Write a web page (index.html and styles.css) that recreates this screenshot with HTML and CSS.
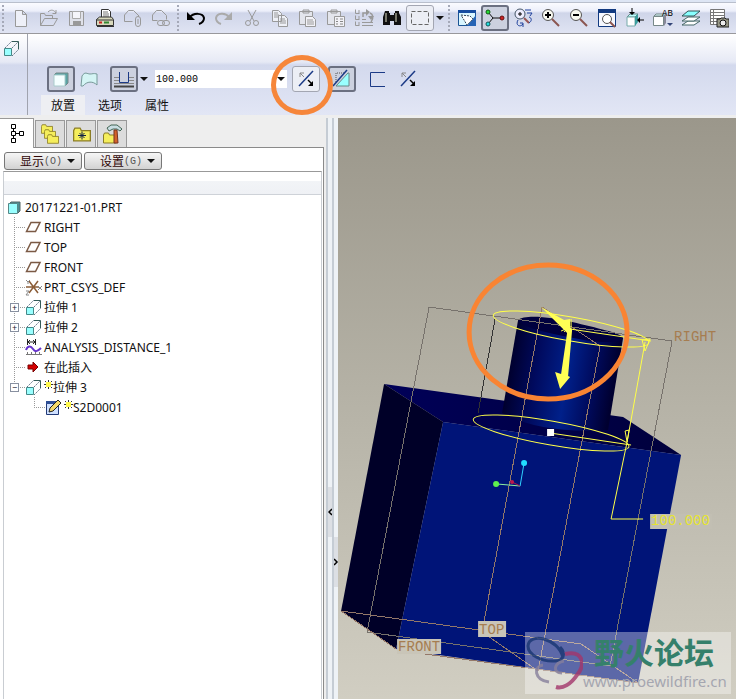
FILE: index.html
```html
<!DOCTYPE html>
<html lang="zh-CN">

<head>
    <meta charset="UTF-8">
    <meta name="viewport" content="width=device-width, initial-scale=1.0">
    <title>20171221-01.PRT</title>
    <link rel="stylesheet" href="styles.css">
</head>

<body>
    <!-- shared icons -->
    <svg class="defs" aria-hidden="true">
        <symbol id="extrude" viewBox="0 0 18 18">
            <path d="M2 9L9 2M9 9l6-6M9 17l7-7" fill="none" stroke="#678" stroke-dasharray="2 1" />
            <path d="M9 2.500h6.500V10" fill="none" stroke="#345b58" />
            <path d="M1.500 9.500h7v7h-7z" fill="#9ff" stroke="#488" />
        </symbol>
        <symbol id="plane" viewBox="0 0 18 18">
            <path d="M1.500 13.500L6 4.500h9L10.500 13.500z" fill="none" stroke="#7b5a45" stroke-width="1.500" />
        </symbol>
        <symbol id="flip" viewBox="0 0 20 20">
            <path d="M3 17L17 2" stroke="#1b3a86" stroke-width="1.500" />
            <path d="M4 8V4h4M4 4l4 4" fill="none" stroke="#888" />
            <path d="M12 11l4 4" stroke="#000" stroke-width="1.500" />
            <path d="M17 12v5h-5z" fill="#000" />
        </symbol>
        <symbol id="spark" viewBox="0 0 9 9">
            <path d="M0 4.500h9M4.500 0v9M1 1l7 7M8 1L1 8" stroke="#333" />
            <path d="M2 2h5v5H2z" fill="#fff94a" />
        </symbol>
        <symbol id="folder" viewBox="0 0 14 11">
            <path d="M.5 2.500l1-2h4l1 2h7v8H.5z" fill="#f5ee5c" stroke="#8b7d26" />
        </symbol>
    </svg>

    <div class="toolbar">
        <span class="grip"></span>
        <button class="tool" aria-label="新建"><svg viewBox="0 0 20 20"><path d="M4.500 2.500h7l4 4v12h-11zM11.500 2.500v4h4" fill="#eef0f8" stroke="#999" /></svg></button>
        <button class="tool" aria-label="打开"><svg viewBox="0 0 20 20"><path d="M1.500 17.500v-12h4l1 2h7v3M1.500 17.500l4-7h13l-4 7zM9 4c3-3 6-2 8 1M17 2v3.500h-3.500" fill="none" stroke="#999" /></svg></button>
        <button class="tool" aria-label="保存"><svg viewBox="0 0 20 20"><path d="M2.500 3.500h14v14h-14z" fill="#dfe1e9" stroke="#999" /><path d="M5.500 3.500h8v7h-8z" fill="#f5f5fa" stroke="#aaa" /><path d="M6 13h8v4H6z" fill="#999" /></svg></button>
        <button class="tool" aria-label="打印"><svg viewBox="0 0 20 20"><path d="M6.500 10V1.500h7l2 2V10" fill="#fff" stroke="#333" /><path d="M8 4h5M8 6h6M8 8h6" stroke="#777" /><path d="M1.500 11.500l3-2.500h12l2 2.500v6h-17z" fill="#d8d8bc" stroke="#333" /><path d="M1 12h17M2 18.500h17" stroke="#333" /><path d="M4 14.500h3" stroke="#c22" stroke-width="2" /><path d="M9 14.500h5" stroke="#383" stroke-width="2" /></svg></button>
        <button class="tool" aria-label="附件"><svg viewBox="0 0 20 20"><path d="M1.500 13.500V7l4-4.500h5l5 5M1.500 13.500h8M15.500 7v2" fill="none" stroke="#999" /><rect x="12.500" y="8.500" width="5" height="10" rx="2.500" fill="none" stroke="#999" /><path d="M15 11v5" stroke="#999" /></svg></button>
        <button class="tool" aria-label="链接"><svg viewBox="0 0 20 20"><path d="M1.500 12.500V7l4-4.500h5l5 5v4M1.500 12.500h5" fill="none" stroke="#999" /><rect x="6.500" y="12.500" width="7" height="5" rx="2.500" fill="none" stroke="#999" /><rect x="11.500" y="12.500" width="7" height="5" rx="2.500" fill="none" stroke="#999" /></svg></button>
        <span class="grip"></span>
        <button class="tool" aria-label="撤消"><svg viewBox="0 0 20 20"><path d="M3 10c5-6 14-5 15 0 0 3-2 5-5 6" fill="none" stroke="#000" stroke-width="2" /><path d="M1 4v8h8z" /></svg></button>
        <button class="tool" aria-label="重做"><svg viewBox="0 0 20 20"><path d="M15 9c-4-5-12-4-13 1 0 3 2 5 5 6" fill="none" stroke="#aaa" stroke-width="2" /><path d="M18 4v8h-8z" fill="#aaa" /></svg></button>
        <button class="tool" aria-label="剪切"><svg viewBox="0 0 20 20"><path d="M6 2l6 11M14 2L8 13" stroke="#999" /><circle cx="6" cy="15" r="2.500" fill="none" stroke="#999" /><circle cx="14" cy="15" r="2.500" fill="none" stroke="#999" /></svg></button>
        <button class="tool" aria-label="复制"><svg viewBox="0 0 20 20"><path d="M2.500 2.500h6l3 3v8h-9zM8.500 7.500h6l3 3v8h-9z" fill="#eef0f6" stroke="#999" /><path d="M4 5h4M4 7h5M4 9h4M10 11h5M10 13h6M10 15h6" stroke="#999" /></svg></button>
        <button class="tool" aria-label="粘贴"><svg viewBox="0 0 20 20"><path d="M1.500 3.500h13v13h-13zM5 5V2h6v3z" fill="#e3e5ec" stroke="#999" /><path d="M7.500 8.500h7l3 3v7h-10z" fill="#f2f2f7" stroke="#999" /><path d="M9 12h6M9 14h7M9 16h7" stroke="#999" /></svg></button>
        <button class="tool" aria-label="选择性粘贴"><svg viewBox="0 0 20 20"><path d="M1.500 3.500h13v13h-13zM5 5V2h6v3z" fill="#e3e5ec" stroke="#999" /><path d="M8.500 8.500h10v10h-10z" fill="#f2f2f7" stroke="#999" /><path d="M10 11h2M14 11h3M10 13.500h2M14 13.500h3M10 16h2M14 16h3" stroke="#888" /></svg></button>
        <button class="tool" aria-label="再生"><svg viewBox="0 0 20 20"><path d="M1.500 1.500v4h4M1.500 7.500v4h4M1.500 13.500v4h4M5 2v3M5 8v3M5 14v3M8 17.500h11M8 14.500h11M8 11.500h4" fill="none" stroke="#999" /><path d="M9 9V5h3M17 14c3-4 2-8-1-9" fill="none" stroke="#999" stroke-width="1.500" /><path d="M12 1v7l4-4zM14 8h6l-3 4z" fill="#999" /></svg></button>
        <button class="tool" aria-label="查找"><svg viewBox="0 0 20 20"><path d="M3 3h4v2h1v12H1V9zM13 3h4v2l2 4v8h-7V5h1zM8 7h4v6H8z" fill="#111" /><path d="M4 5v9M14 5v9" stroke="#998" stroke-width="1.500" /></svg></button>
        <button class="tool boxed" aria-label="选取"><svg viewBox="0 0 20 20"><path d="M1.500 3.500h17v13h-17z" fill="none" stroke="#666" stroke-dasharray="4 2" /></svg></button>
        <button class="drop" aria-label="更多"><i class="caret"></i></button>
        <span class="grip"></span>
        <button class="tool" aria-label="重画"><svg viewBox="0 0 20 20"><path d="M1.500 2.500h17v15h-17z" fill="#d9f6ff" stroke="#1a5494" /><path d="M1 2h18v3H1z" fill="#174da0" /><path d="M19 7v11h-9z" fill="#2563b5" /><path d="M4 7l9 1 3 3-6 6z" fill="#fff" stroke="#345" stroke-dasharray="2 1" /></svg></button>
        <button class="tool pressed" aria-label="旋转中心"><svg viewBox="0 0 20 20"><path d="M3 4l5 6-5 6M8 10h9" fill="none" stroke="#111" /><circle cx="3" cy="4" r="2" fill="#2d3" stroke="#151" /><circle cx="3" cy="16" r="2" fill="#2dd" stroke="#155" /><circle cx="17" cy="10" r="2" fill="#c22" stroke="#611" /></svg></button>
        <button class="tool" aria-label="定向模式"><svg viewBox="0 0 20 20"><circle cx="7" cy="6" r="5" fill="#eef" stroke="#456" /><path d="M5 6h4M7 4v4" stroke="#000" /><path d="M11 10l5 5" stroke="#955" stroke-width="2" /><path d="M12 2h6M14 5h5M17 8l2-3M5 12c-3 5 2 8 5 4M10 19v-4H7M16 9c3 1 3 4 0 6" fill="none" stroke="#1d3f9c" /></svg></button>
        <button class="tool" aria-label="放大"><svg viewBox="0 0 20 20"><circle cx="7" cy="7" r="5.500" fill="#f9f9ef" stroke="#555" /><path d="M4 7h6M7 4v6" stroke="#000" stroke-width="2" /><path d="M11 11l7 7" stroke="#8b5550" stroke-width="2" /></svg></button>
        <button class="tool" aria-label="缩小"><svg viewBox="0 0 20 20"><circle cx="7" cy="7" r="5.500" fill="#f9f9ef" stroke="#555" /><path d="M4 7h6" stroke="#000" stroke-width="2" /><path d="M11 11l7 7" stroke="#8b5550" stroke-width="2" /></svg></button>
        <button class="tool" aria-label="重新调整"><svg viewBox="0 0 20 20"><path d="M1.500 2.500h17v16h-17z" fill="#f6f8ff" stroke="#123a80" /><path d="M1 1h18v4H1z" fill="#123a80" /><circle cx="10" cy="11" r="4.500" fill="#fff" stroke="#555" /><path d="M13 14l5 5" stroke="#8b5550" stroke-width="2" /></svg></button>
        <button class="tool" aria-label="重定向"><svg viewBox="0 0 20 20"><path d="M2 9l3-3h8l-3 3z" fill="#bff" stroke="#688" /><path d="M2 9h8v9H2z" fill="#fff" stroke="#7aa" /><path d="M10 9l3-3v8l-3 4z" fill="#3a9d9d" /><path d="M7 0v6M19 12h-6" stroke="#000" /><path d="M4 4h6L7 7zM15 9v6l-3-3z" /></svg></button>
        <button class="tool" aria-label="视图列表"><svg viewBox="0 0 20 20"><path d="M1 8l2-2h10l-2 2z" fill="#dff" stroke="#788" /><path d="M.5 8.500h10v9H.5z" fill="#fff" stroke="#788" /><path d="M11 8l2-2v9l-2 3z" fill="#889" /><path d="M14 15h6l-3 3z" fill="#347" /><text x="9" y="8" class="tiny">AB</text></svg></button>
        <button class="tool" aria-label="层"><svg viewBox="0 0 20 20"><path d="M1 17l6-4h12l-6 4z" fill="#fff" stroke="#466" /><path d="M1 13l6-4h12l-6 4z" fill="#fff" stroke="#466" /><path d="M1 8l6-5h12l-6 5z" fill="#8ff" stroke="#355" /></svg></button>
        <button class="tool" aria-label="视图管理器"><svg viewBox="0 0 20 20"><path d="M1.500 1.500h14v15h-14zM1 4.500h15M1 7.500h15M1 10.500h15M1 13.500h15M4.500 1v16" fill="#fff" stroke="#777" /><path d="M8 11h3l1-1h4l1 1h3v8H8z" fill="#998" stroke="#222" /><circle cx="14" cy="15" r="3" fill="#eee" stroke="#111" /></svg></button>
    </div>

    <div class="dashboard">
        <div class="feature-type"><svg class="icon"><use href="#extrude" /></svg></div>
        <div class="feature-options">
            <div class="option-row">
                <button class="tool pressed" aria-label="实体"><svg viewBox="0 0 20 20"><path d="M3 6l2-2h12v10l-3 3z" fill="#5aa5a5" stroke="#788" /><path d="M3 6h11v11H3z" fill="#f4ffff" stroke="#acc" /></svg></button>
                <button class="tool" aria-label="曲面"><svg viewBox="0 0 20 20"><path d="M3 7c3-5 5-2 8-2s3-1 7 0v11c-4-4-10-4-14 1L2 17z" fill="#d4f4f4" stroke="#799" /></svg></button>
                <button class="tool pressed depth" aria-label="深度"><svg viewBox="0 0 20 20"><path d="M0 8.500h6M14 8.500h6M0 11.500h6M14 11.500h6M0 14.500h20" stroke="#888" /><path d="M5.500 3v10.500h9V3" fill="none" stroke="#1b3a86" /><path d="M0 17.500h20" stroke="#444" stroke-width="2" /></svg></button>
                <button class="drop" aria-label="深度选项"><i class="caret"></i></button>
                <div class="combo">
                    <input type="text" value="100.000" aria-label="深度值">
                    <button class="drop" aria-label="最近值"><i class="caret"></i></button>
                </div>
                <div class="marked">
                    <button class="tool boxed" aria-label="反向"><svg><use href="#flip" /></svg></button>
                    <span class="mark"></span>
                </div>
                <button class="tool pressed" aria-label="移除材料"><svg viewBox="0 0 20 20"><path d="M4 17L16 4h1v13z" fill="#9ff" stroke="#688" /><path d="M4 13V4h8" fill="none" stroke="#555" stroke-dasharray="1 1" /><path d="M1 17L15 1" stroke="#1b3a86" stroke-width="1.500" /></svg></button>
                <button class="tool thicken" aria-label="加厚"><svg viewBox="0 0 20 20"><path d="M17 3.500H2.500v14H17" fill="none" stroke="#1b3a86" /></svg></button>
                <button class="tool" aria-label="更改侧"><svg><use href="#flip" /></svg></button>
            </div>
            <div class="option-tabs">
                <button class="active">放置</button>
                <button>选项</button>
                <button>属性</button>
            </div>
        </div>
    </div>

    <main class="workspace">
        <section class="navigator">
            <div class="nav-tabs">
                <button class="active" aria-label="模型树"><svg viewBox="0 0 22 22"><path d="M7.500 5v11M7.500 10.500h7" stroke="#000" /><path d="M5.500 1.500h4v4h-4zM5.500 8.500h4v4h-4zM5.500 15.500h4v4h-4zM13.500 8.500h4v4h-4z" fill="#fff" stroke="#000" /></svg></button>
                <button aria-label="文件夹"><svg viewBox="0 0 22 22"><use href="#folder" x="2" y="1" width="12" height="10" /><use href="#folder" x="5" y="6" width="12" height="10" /><use href="#folder" x="8" y="11" width="12" height="10" /></svg></button>
                <button aria-label="收藏夹"><svg viewBox="0 0 22 22"><use href="#folder" x="3" y="4" width="18" height="15" /><path d="M8 12.500h8M12 8.500v8M9.500 10l5 5M14.500 10l-5 5" stroke="#124" /></svg></button>
                <button aria-label="连接"><svg viewBox="0 0 22 22"><use href="#folder" x="2" y="9" width="14" height="12" /><path d="M6 5l4-3h6l5 4-2 2-3-2h-4L8 8z" fill="#c9dde2" stroke="#465" /><path d="M13 7h3l1 13h-4z" fill="#d4622a" stroke="#732" /></svg></button>
            </div>
            <div class="nav-panel">
                <div class="nav-menus">
                    <button>显示<span>(O)</span><i class="caret"></i></button>
                    <button>设置<span>(G)</span><i class="caret"></i></button>
                </div>
                <div class="tree-box">
                    <div class="tree-head"></div>
                    <ul class="tree">
                        <li class="root"><svg class="icon" viewBox="0 0 18 18"><path d="M3 6l2-2h9v9l-2 2z" fill="#4c8f94" stroke="#566" /><path d="M2.500 5.500h9v10h-9z" fill="#9ff" stroke="#588" /></svg>20171221-01.PRT</li>
                        <li><span class="branch"></span><svg class="icon"><use href="#plane" /></svg>RIGHT</li>
                        <li><span class="branch"></span><svg class="icon"><use href="#plane" /></svg>TOP</li>
                        <li><span class="branch"></span><svg class="icon"><use href="#plane" /></svg>FRONT</li>
                        <li><span class="branch"></span><svg class="icon" viewBox="0 0 18 18"><path d="M1 9h13M4 3l9 12M13 3L4 15" stroke="#8b5d38" stroke-width="1.500" /><path d="M1 2l2 2 2-2M3 4v2M13 8l4 4M17 8l-4 4M1 13h3l-3 4h3" fill="none" stroke="#888" /></svg>PRT_CSYS_DEF</li>
                        <li><span class="branch"><button class="toggle" aria-label="展开">+</button></span><svg class="icon"><use href="#extrude" /></svg>拉伸 1</li>
                        <li><span class="branch"><button class="toggle" aria-label="展开">+</button></span><svg class="icon"><use href="#extrude" /></svg>拉伸 2</li>
                        <li><span class="branch"></span><svg class="icon" viewBox="0 0 18 18"><path d="M2.500 1v6M10.500 1v6M3 4h7M5 2L3 4l2 2M8 2l2 2-2 2" fill="none" stroke="#222" /><path d="M1 12c2-5 5-4 7-1s4 3 8-1" fill="none" stroke="#63c" stroke-width="2" /><path d="M1 16.500h16M2.500 14v2M6.500 14v2M10.500 14v2M14.500 14v2" stroke="#777" /></svg>ANALYSIS_DISTANCE_1</li>
                        <li><span class="branch"></span><svg class="icon" viewBox="0 0 18 18"><path d="M3 7h5V4l5 5-5 5v-3H3z" fill="#d40000" stroke="#700" /></svg>在此插入</li>
                        <li><span class="branch last"><button class="toggle" aria-label="折叠">−</button></span><svg class="icon"><use href="#extrude" /></svg><svg class="new"><use href="#spark" /></svg>拉伸 3</li>
                        <li class="child"><span class="branch last"></span><svg class="icon" viewBox="0 0 18 18"><path d="M1.500 4.500h12v12h-12z" fill="#cfe0ff" stroke="#223a78" /><path d="M1 3h13v3H1z" fill="#2e4f96" /><path d="M4 14l1-4 8-8 3 3-8 8z" fill="#f5da6a" stroke="#222" /></svg><svg class="new"><use href="#spark" /></svg>S2D0001</li>
                    </ul>
                </div>
            </div>
        </section>

        <div class="splitter">
            <div class="rail"><button aria-label="隐藏导航器"><svg viewBox="0 0 6 8"><path d="M4 1L1 4l3 3" fill="none" stroke="#000" stroke-width="1.500" /></svg></button></div>
            <div class="rail low"><button aria-label="显示浏览器"><svg viewBox="0 0 6 8"><path d="M0 1l3 3-3 3" fill="none" stroke="#000" stroke-width="1.500" /></svg></button></div>
        </div>

        <section class="viewer">
            <svg class="model" viewBox="338 118 398 581">
                <defs>
                    <linearGradient id="barrel" gradientUnits="userSpaceOnUse" x1="510" y1="365" x2="614" y2="382">
                        <stop offset="0" stop-color="#00002e" />
                        <stop offset=".25" stop-color="#000a5e" />
                        <stop offset=".55" stop-color="#00208a" />
                        <stop offset=".8" stop-color="#000a5c" />
                        <stop offset="1" stop-color="#000030" />
                    </linearGradient>
                    <linearGradient id="lid" x1="0" x2="1">
                        <stop offset="0" stop-color="#000058" />
                        <stop offset="1" stop-color="#00003c" />
                    </linearGradient>
                </defs>
                <!-- box -->
                <path d="M384 384L623 417L681 455L443 422z" fill="url(#lid)" />
                <path d="M384 384L443 422L396 649L341 611z" fill="#000028" />
                <path d="M443 422L681 455L638 683L396 649z" fill="#001478" />
                <!-- cylinder -->
                <path d="M518 320L502 413Q540 434 608 430L623 338z" fill="url(#barrel)" />
                <path d="M518 320C524 314 552 317 572 322C596 328 622 333 623 338C618 345 593 342 568 337C542 332 520 326 518 320z" fill="#00003e" />
                <!-- datum planes -->
                <g class="datum">
                    <path d="M429 307L672 341L610 666L367 632z" />
                    <path class="dark" d="M495 319L478 413" />
                    <path class="brown" d="M396 649L341 611L581 644L638 683L425 654" />
                    <path class="brown" d="M542 307L600 346L538 671L482 632z" />
                </g>
                <!-- sketch and depth dimension -->
                <g class="sketch">
                    <ellipse cx="571" cy="329" rx="79" ry="12" transform="rotate(10 571 329)" />
                    <ellipse cx="551" cy="433" rx="79" ry="12" transform="rotate(10 551 433)" />
                    <path d="M570 329L651 341M550 433L631 445M645 342L627 442L611 519H643" />
                    <path d="M642 340l8-1-5 12zM625 431l4-1-2 12z" />
                    <path d="M561 331l7-3M564 332l4-4M571 319v12" />
                </g>
                <path d="M541 307L564 320L570 319V327L572 330L568 376L570 377L560 389L555 372L561 374L567 333z" fill="#ffff55" />
                <path d="M547 429h7v7h-7z" fill="#fff" />
                <!-- spin center -->
                <g fill="none">
                    <path d="M497 484L520 486" stroke="#8ef0a0" />
                    <path d="M520 486L524 463" stroke="#2fd0ff" />
                    <path d="M512 482L520 486" stroke="#b01850" />
                    <circle cx="496" cy="484" r="3" fill="#5ef04e" />
                    <circle cx="524" cy="463" r="3" fill="#22dcff" />
                    <circle cx="512" cy="482" r="2" fill="#c0184c" />
                </g>
                <g class="labels">
                    <path d="M397 639h44v15h-44zM478 621h28v16h-28z" />
                    <path d="M650 514h62v15h-62z" fill="#c2bfb3" />
                    <text x="674" y="341">RIGHT</text>
                    <text x="398" y="651">FRONT</text>
                    <text x="479" y="634">TOP</text>
                    <text x="651" y="525" class="dim">100.000</text>
                </g>
                <ellipse cx="548" cy="332" rx="79" ry="67" fill="none" stroke="#f98433" stroke-width="5" />
            </svg>
            <div class="watermark">
                <svg viewBox="0 0 58 58"><path d="M38 24C34 4 4-2 3 12c0 9 14 16 27 15 9 0 11-8 5-14" fill="none" stroke="#183572" stroke-width="3" /><path d="M40 20c18-4 21 10 12 21-6 9-14 14-21 12" fill="none" stroke="#a3366b" stroke-width="4" /><path d="M39 27c-10 2-12 12-2 12M18 31c-10 1-9 15 6 17" fill="none" stroke="#87809c" stroke-width="3" /></svg>
                <div class="brand"><strong>野火论坛</strong><a href="#">www.proewildfire.cn</a></div>
            </div>
        </section>
    </main>
</body>

</html>
```
FILE: styles.css
```css
* {
    box-sizing: border-box;
}

body {
    margin: 0;
    height: 100vh;
    display: flex;
    flex-direction: column;
    overflow: hidden;
    background-color: #eeeeee;
    font-family: "Noto Sans", "Noto Sans CJK SC", sans-serif;
    font-size: 12px;
    color: #111;
}

button {
    font: inherit;
    color: inherit;
    border: none;
    background: none;
    padding: 0;
}

.defs {
    display: none;
}

.icon {
    width: 18px;
    height: 18px;
    flex: none;
}

.caret {
    display: inline-block;
    border: 4px solid transparent;
    border-top-color: #111;
    border-bottom: none;
}

/* top toolbar */
.toolbar {
    display: flex;
    align-items: center;
    height: 34px;
    flex: none;
    border-top: 2px solid #dde5f4;
    border-bottom: 1px solid #98989c;
    background: linear-gradient(#b9bfcc 1px, #fafbff 1px, #eceffa 9px, #cfd5e9 11px, #e0e4f3);
}

.grip {
    width: 7px;
    height: 26px;
    flex: none;
    background: repeating-linear-gradient(#a5a9b8 0 2px, transparent 2px 4px) 2px 0 / 2px 100% no-repeat;
}

.tool {
    display: flex;
    align-items: center;
    justify-content: center;
    width: 28px;
    height: 26px;
    flex: none;
    border: 1px solid transparent;
    border-radius: 3px;
}

.tool svg {
    width: 20px;
    height: 20px;
}

.tool.boxed {
    border-color: #a3a6b2;
    background-color: #eceef5;
}

.tool.pressed {
    border: 2px solid #6b7081;
    background-color: #ccd1df;
}

.drop {
    width: 12px;
    display: flex;
    justify-content: center;
    flex: none;
}

.tiny {
    font-family: "Liberation Mono", monospace;
    font-size: 9px;
}

/* feature dashboard */
.dashboard {
    display: flex;
    flex: none;
    height: 81px;
    background: linear-gradient(#ffffff, #e6e9f5 28px, #d3d9ed 31px, #e2e6f5);
}

.feature-type {
    width: 28px;
    padding: 5px 3px;
    border-right: 1px solid #a0a3ae;
}

.feature-options {
    padding-top: 32px;
}

.option-row {
    display: flex;
    align-items: center;
    height: 26px;
    padding-left: 19px;
}

.depth {
    margin-left: 7px;
}

.combo {
    display: flex;
    align-items: center;
    width: 132px;
    height: 18px;
    margin: 0 5px;
    background-color: white;
}

.combo input {
    flex: 1;
    min-width: 0;
    padding: 0 1px;
    border: none;
    outline: none;
    background: none;
    font-family: "Liberation Mono", monospace;
    font-size: 10px;
}

.marked {
    position: relative;
    margin-right: 8px;
}

.mark {
    position: absolute;
    top: -11px;
    left: -21px;
    width: 62px;
    height: 60px;
    border: 5px solid #f6863a;
    border-radius: 50%;
    pointer-events: none;
}

.thicken {
    margin: 0 2px 0 8px;
}

.option-tabs {
    display: flex;
    gap: 3px;
    padding: 3px 0 0 13px;
}

.option-tabs button {
    width: 44px;
    height: 20px;
}

.option-tabs .active {
    background-color: #eeeff3;
}

/* main area */
.workspace {
    display: flex;
    flex: 1;
    min-height: 0;
    padding-top: 3px;
}

.navigator {
    display: flex;
    flex-direction: column;
    width: 44%;
}

.nav-tabs {
    display: flex;
    align-items: flex-end;
    flex: none;
    height: 29px;
}

.nav-tabs button {
    display: flex;
    align-items: center;
    justify-content: center;
    width: 30px;
    height: 27px;
    margin-right: 1px;
    border: 1px solid #999;
    border-bottom: none;
    background-color: #dcdcdc;
}

.nav-tabs .active {
    width: 34px;
    height: 30px;
    margin-bottom: -1px;
    border-left: none;
    background-color: white;
    z-index: 1;
}

.nav-tabs svg {
    width: 22px;
    height: 22px;
}

.nav-panel {
    display: flex;
    flex-direction: column;
    flex: 1;
    min-height: 0;
    padding: 4px 1px 0 3px;
    border-top: 1px solid #8a8a8a;
    border-right: 1px solid #8a8a8a;
    background-color: white;
}

.nav-menus {
    display: flex;
    gap: 2px;
    margin-bottom: 1px;
    padding-left: 1px;
}

.nav-menus button {
    display: flex;
    align-items: center;
    justify-content: flex-end;
    width: 78px;
    height: 18px;
    padding-right: 6px;
    border: 1px solid #777;
    border-radius: 3px;
    background: linear-gradient(#f6f6f6, #d2d2d2);
    color: #300808;
}

.nav-menus span {
    margin-right: 5px;
    font-family: "Liberation Mono", monospace;
    font-size: 10px;
    color: #555;
}

.tree-box {
    flex: 1;
    border: 1px solid #c9cdd2;
    border-top-color: #999;
    border-bottom: none;
}

.tree-head {
    height: 23px;
    border-bottom: 1px solid #ced2d8;
    background: linear-gradient(#ffffff 40%, #f2f4f7 42%, #eff1f5);
}

.tree {
    margin: 0;
    padding: 2px 0 0 1px;
    list-style: none;
}

.tree li {
    display: flex;
    align-items: center;
    height: 20px;
    white-space: pre;
}

.tree .icon {
    margin-right: 1px;
}

.tree .root {
    padding-left: 1px;
}

.tree .child {
    padding-left: 20px;
}

.branch {
    display: flex;
    align-items: center;
    width: 20px;
    height: 20px;
    padding-left: 5px;
    background:
        repeating-linear-gradient(#999 0 1px, transparent 1px 2px) 9px 0 / 1px 100% no-repeat,
        repeating-linear-gradient(90deg, #999 0 1px, transparent 1px 2px) 9px 10px / 11px 1px no-repeat;
}

.branch.last {
    background-size: 1px 10px, 11px 1px;
}

.toggle {
    width: 9px;
    height: 9px;
    border: 1px solid #8890a0;
    background-color: white;
    color: #223;
    font-size: 9px;
    line-height: 7px;
}

.new {
    width: 9px;
    height: 9px;
    margin-bottom: 6px;
}

/* splitter rails between the navigator and the viewer */
.splitter {
    display: flex;
    flex: none;
    width: 14px;
    padding-left: 2px;
}

.rail {
    width: 6px;
    padding-top: 369px;
    border-left: 2px solid #c5ccd4;
    background-color: #eef2f6;
}

.rail.low {
    padding-top: 419px;
}

.rail button {
    display: flex;
    align-items: center;
    width: 4px;
    height: 50px;
    background-color: #dcdfe4;
}

.rail svg {
    width: 6px;
    height: 8px;
    flex: none;
}

/* 3D viewer */
.viewer {
    position: relative;
    flex: 1;
    min-width: 0;
    background: linear-gradient(#9b978b, #b6b3a7 50%, #d1cec2);
}

.model {
    display: block;
    width: 100%;
    height: 100%;
}

.datum {
    fill: none;
    stroke: #77726c;
    shape-rendering: crispEdges;
}

.datum .dark {
    stroke: #333;
}

.datum .brown {
    stroke: #947869;
}

.sketch {
    fill: none;
    stroke: #ffff48;
}

.labels {
    fill: #c9c5b8;
    font-family: "Liberation Mono", monospace;
    font-size: 14px;
}

.labels text {
    fill: #a67d50;
}

.labels .dim {
    fill: #e6e431;
}

.watermark {
    position: absolute;
    right: 5px;
    bottom: 5px;
    display: flex;
    align-items: center;
    width: 206px;
    height: 62px;
    background-color: rgba(255, 255, 255, 0.36);
}

.watermark svg {
    width: 58px;
    height: 58px;
    flex: none;
    opacity: 0.8;
}

.brand strong {
    display: block;
    padding-left: 11px;
    font-size: 30px;
    line-height: 36px;
    color: #35806b;
}

.brand a {
    display: block;
    font-size: 15px;
    line-height: 20px;
    color: #a5a6b0;
    text-decoration: none;
}
```
